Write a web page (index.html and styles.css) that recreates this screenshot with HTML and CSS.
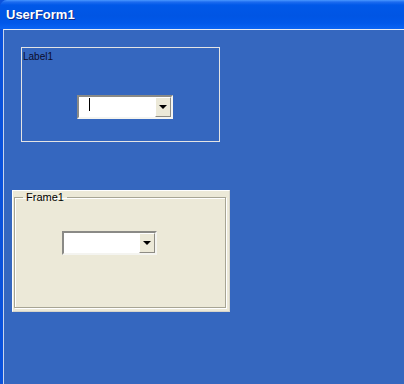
FILE: index.html
```html
<!DOCTYPE html>
<html lang="en">
<head>
    <meta charset="UTF-8">
    <title>UserForm1</title>
    <link rel="stylesheet" href="styles.css">
</head>
<body>

    <!-- Window -->
    <div class="window">
        <div class="titlebar">UserForm1</div>

        <div class="client">

            <!-- Label with combo -->
            <div class="label-box">
                <div class="label-text">Label1</div>
                <div class="combo combo-top">
                    <div class="combo-field"><span class="caret"></span></div>
                    <div class="combo-btn"><span class="arrow"></span></div>
                </div>
            </div>

            <!-- Frame with combo -->
            <div class="frame-panel">
                <fieldset class="frame">
                    <legend>Frame1</legend>
                    <div class="combo combo-frame">
                        <div class="combo-field"></div>
                        <div class="combo-btn"><span class="arrow"></span></div>
                    </div>
                </fieldset>
            </div>

        </div>
    </div>

</body>
</html>
```

FILE: styles.css
```css
* {
    margin: 0;
    padding: 0;
    box-sizing: border-box;
}

body {
    width: 404px;
    height: 384px;
    overflow: hidden;
    background-color: #0a52dc;
    font-family: 'Liberation Sans', Arial, sans-serif;
}

.window {
    display: flex;
    flex-direction: column;
    height: 384px;
}

/* Title bar */
.titlebar {
    height: 29px;
    padding: 6px 0 0 6px;
    border-top-left-radius: 7px;
    background: linear-gradient(#4a98ff 0, #1d6cf0 2px, #0058e8 5px, #0055e4 55%, #0058ea 80%, #0a64f4 100%);
    color: #ffffff;
    font-size: 13px;
    font-weight: bold;
    line-height: 17px;
    text-shadow: 1px 1px 0 #0a2a8a;
}

/* Form body */
.client {
    flex: 1;
    margin-left: 3px;
    border-top: 1px solid #e6ecf6;
    border-left: 1px solid #c9d6ee;
    background-color: #3567bf;
    padding: 17px 0 0 17px;
}

.label-box {
    width: 199px;
    height: 95px;
    border: 1px solid #e4e4e4;
    padding: 3px 0 0 1px;
}

.label-text {
    font-size: 10px;
    line-height: 11px;
    color: #0c0c2c;
}

/* Combo box */
.combo {
    display: flex;
    width: 96px;
    height: 24px;
    background-color: #ffffff;
    border-top: 2px solid #8a8a86;
    border-left: 2px solid #8a8a86;
    border-right: 2px solid #f4f4f0;
    border-bottom: 2px solid #f4f4f0;
}

.combo-top {
    margin: 33px 0 0 54px;
}

.combo-field {
    flex: 1;
    padding: 1px 0 0 10px;
}

.caret {
    display: block;
    width: 1px;
    height: 13px;
    background-color: #000000;
}

.combo-btn {
    width: 16px;
    display: flex;
    align-items: center;
    justify-content: center;
    background-color: #ece9d8;
    border-top: 1px solid #ffffff;
    border-left: 1px solid #ffffff;
    border-right: 1px solid #8e8c84;
    border-bottom: 1px solid #8e8c84;
}

.arrow {
    width: 0;
    height: 0;
    border-left: 4px solid transparent;
    border-right: 4px solid transparent;
    border-top: 4px solid #000000;
}

/* Frame */
.frame-panel {
    width: 218px;
    height: 122px;
    margin: 48px 0 0 -9px;
    background-color: #ece9d8;
    border: 1px solid #ffffff;
    border-right-color: #d6d4ca;
    border-bottom-color: #d6d4ca;
    padding: 0 3px 0 1px;
}

.frame {
    height: 117px;
    border: 1px solid #a7a594;
    box-shadow: 1px 1px 0 #ffffff, inset 1px 1px 0 #ffffff;
    padding: 0;
}

.frame legend {
    margin-left: 8px;
    padding: 0 3px;
    font-size: 11px;
    line-height: 12px;
    color: #000000;
}

.combo-frame {
    margin: 28px 0 0 47px;
    width: 95px;
}
```
